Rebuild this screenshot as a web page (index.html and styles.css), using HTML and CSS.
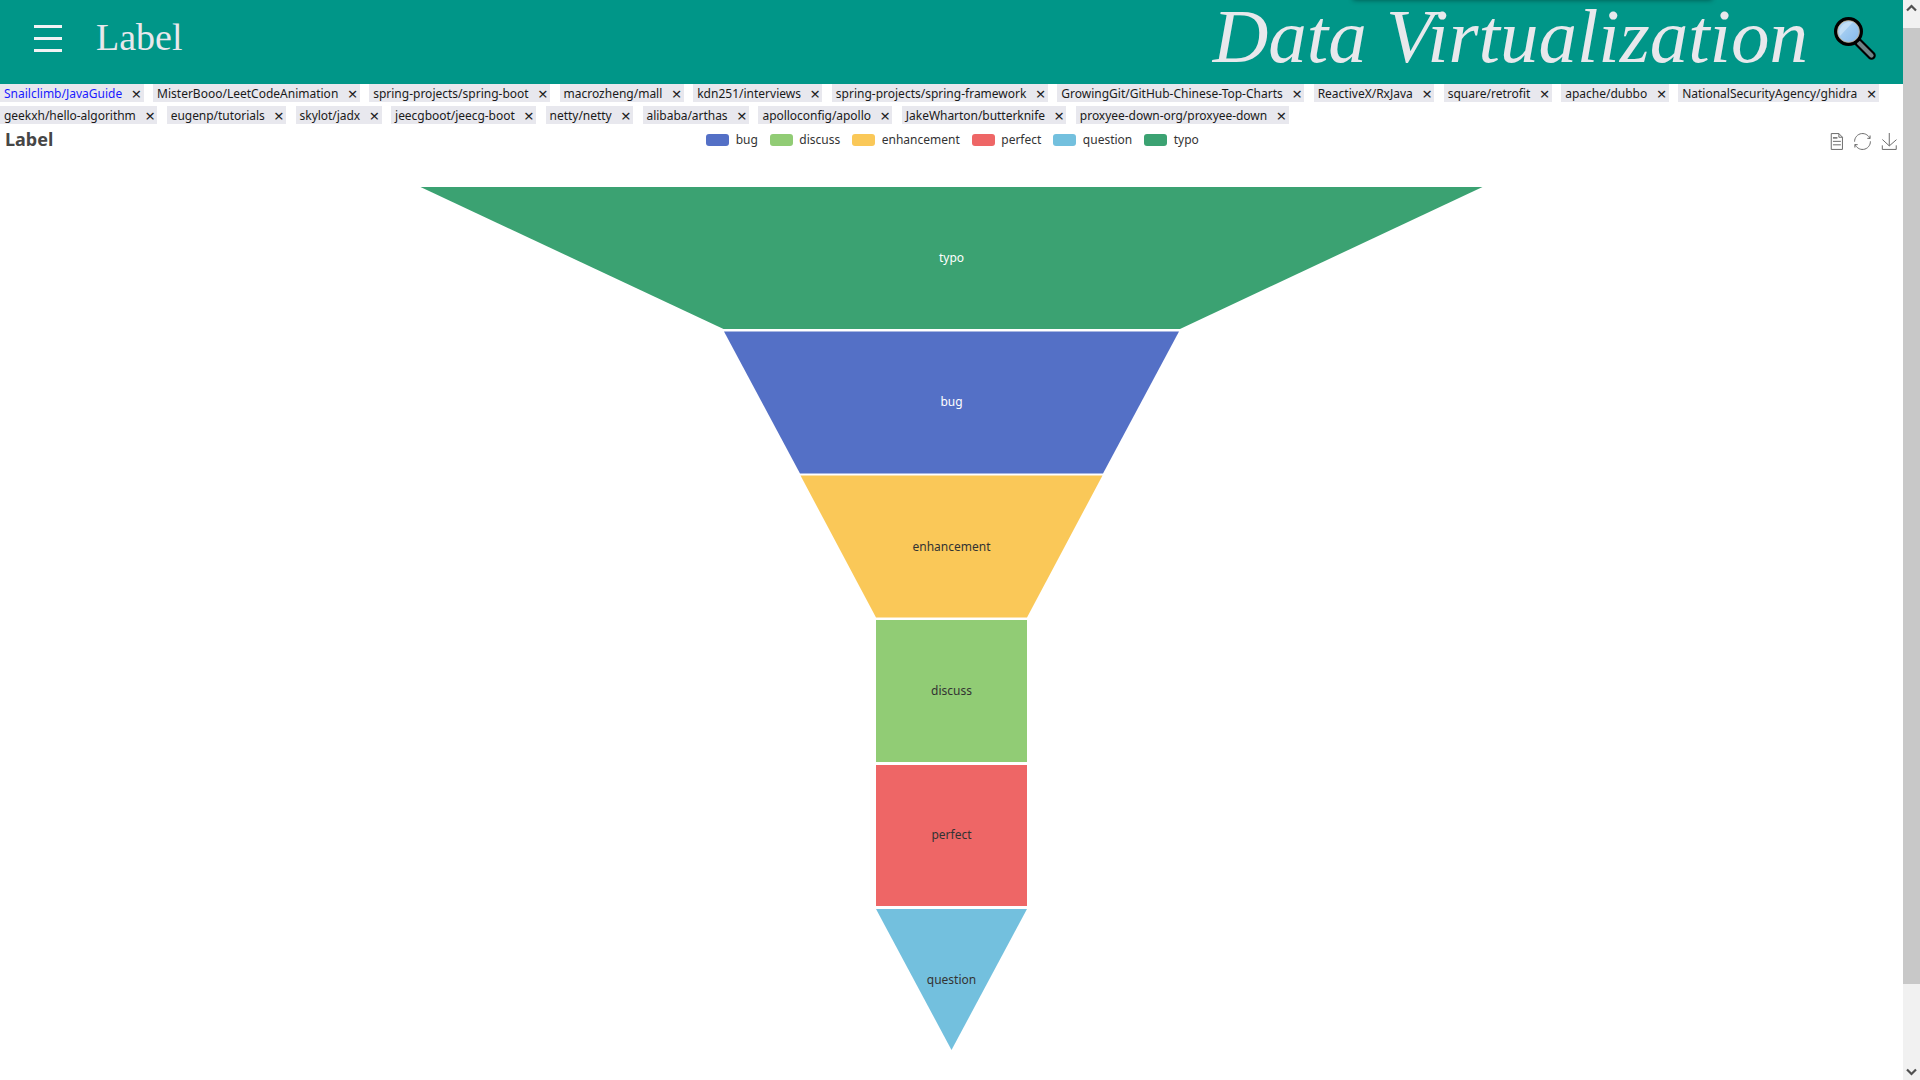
FILE: index.html
```html
<!DOCTYPE html>
<html lang="en">
<head>
<meta charset="utf-8">
<title>Data Virtualization</title>
<link rel="stylesheet" href="styles.css">
</head>
<body>
<div class="page">
  <main class="main">
    <header class="header">
      <div class="header-shadow"></div>
      <button class="burger" aria-label="Menu"><span></span><span></span><span></span></button>
      <div class="crumb">Label</div>
      <h1 class="brand">Data Virtualization</h1>
      <svg class="search" width="46" height="48" viewBox="0 0 46 48" aria-label="Search">
        <defs>
          <linearGradient id="lens" x1="0" y1="0" x2="1" y2="1">
            <stop offset="0" stop-color="#bcdcf6"/><stop offset="1" stop-color="#7fb6ea"/>
          </linearGradient>
        </defs>
        <line x1="24" y1="26" x2="38.5" y2="40.5" stroke="#000" stroke-width="8.5" stroke-linecap="round"/>
        <line x1="26" y1="28" x2="38.5" y2="40.5" stroke="#6f8386" stroke-width="4.2" stroke-linecap="round"/>
        <circle cx="15.5" cy="16.5" r="12.8" fill="url(#lens)" stroke="#000" stroke-width="3.4"/>
        <circle cx="15.5" cy="16.5" r="10.9" fill="none" stroke="#c9a878" stroke-width="0.7"/>
        <path d="M7 21 L20 7 A11 11 0 0 0 7 21Z" fill="#cfe5f8" opacity="0.7"/>
      </svg>
    </header>

    <nav class="tags">
      <div class="tag-row">
        <span class="tag active">Snailclimb/JavaGuide<i>×</i></span>
        <span class="tag">MisterBooo/LeetCodeAnimation<i>×</i></span>
        <span class="tag">spring-projects/spring-boot<i>×</i></span>
        <span class="tag">macrozheng/mall<i>×</i></span>
        <span class="tag">kdn251/interviews<i>×</i></span>
        <span class="tag">spring-projects/spring-framework<i>×</i></span>
        <span class="tag">GrowingGit/GitHub-Chinese-Top-Charts<i>×</i></span>
        <span class="tag">ReactiveX/RxJava<i>×</i></span>
        <span class="tag">square/retrofit<i>×</i></span>
        <span class="tag">apache/dubbo<i>×</i></span>
        <span class="tag">NationalSecurityAgency/ghidra<i>×</i></span>
      </div>
      <div class="tag-row tight">
        <span class="tag">geekxh/hello-algorithm<i>×</i></span>
        <span class="tag">eugenp/tutorials<i>×</i></span>
        <span class="tag">skylot/jadx<i>×</i></span>
        <span class="tag">jeecgboot/jeecg-boot<i>×</i></span>
        <span class="tag">netty/netty<i>×</i></span>
        <span class="tag">alibaba/arthas<i>×</i></span>
        <span class="tag">apolloconfig/apollo<i>×</i></span>
        <span class="tag">JakeWharton/butterknife<i>×</i></span>
        <span class="tag">proxyee-down-org/proxyee-down<i>×</i></span>
      </div>
    </nav>

    <section class="chart-head">
      <h2 class="chart-title">Label</h2>
      <ul class="legend">
        <li><b class="swatch bug"></b>bug</li>
        <li><b class="swatch discuss"></b>discuss</li>
        <li><b class="swatch enhancement"></b>enhancement</li>
        <li><b class="swatch perfect"></b>perfect</li>
        <li><b class="swatch question"></b>question</li>
        <li><b class="swatch typo"></b>typo</li>
      </ul>
      <div class="tools">
        <svg class="tool" viewBox="0 0 60 60"><path d="M17.5,17.3H33 M17.5,17.3H33 M45.4,29.5h-28 M11.5,2v56H51V14.8L38.4,2H11.5z M38.4,2.2v12.7H51 M45.4,41.7h-28"/></svg>
        <svg class="tool" viewBox="0 0 60 60"><path d="M3.8,33.4 M47,18.9h9.8V8.7 M56.3,20.1 C52.1,9,40.5,0.6,26.8,2.1C12.6,3.7,1.6,16.2,2.1,30.6 M13,41.1H3.1v10.2 M3.7,39.9c4.2,11.1,15.8,19.5,29.5,18 c14.2-1.6,25.2-14.1,24.7-28.5"/></svg>
        <svg class="tool" viewBox="0 0 60 60"><path d="M4.7,22.9L29.3,45.5L54.7,23.4M4.6,43.6L4.6,58L53.8,58L53.8,43.6M29.2,45.1L29.2,0"/></svg>
      </div>
    </section>

    <svg class="funnel" viewBox="0 160 1903 920" width="1903" height="920">
      <polygon class="typo-f" points="420.5,187 1482.5,187 1180,329 723.5,329"/>
      <polygon class="bug-f" points="724,331.5 1179,331.5 1103,473.5 800,473.5"/>
      <polygon class="enh-f" points="800.5,475.5 1102.5,475.5 1027,617.5 876,617.5"/>
      <polygon class="dis-f" points="876,620 1027,620 1027,762 876,762"/>
      <polygon class="per-f" points="876,765 1027,765 1027,906 876,906"/>
      <polygon class="que-f" points="876,909 1027,909 951.5,1050"/>
      <text class="flabel light" x="951.5" y="257.5">typo</text>
      <text class="flabel light" x="951.5" y="401.5">bug</text>
      <text class="flabel" x="951.5" y="546.5">enhancement</text>
      <text class="flabel" x="951.5" y="690.5">discuss</text>
      <text class="flabel" x="951.5" y="834.5">perfect</text>
      <text class="flabel" x="951.5" y="979.5">question</text>
    </svg>
  </main>

  <aside class="scrollbar">
    <svg class="chev" viewBox="0 0 17 17"><path d="M4 10.5 L8.5 6 L13 10.5"/></svg>
    <div class="thumb-gap"></div>
    <div class="thumb"></div>
    <div class="track"></div>
    <svg class="chev" viewBox="0 0 17 17"><path d="M4 6.5 L8.5 11 L13 6.5"/></svg>
  </aside>
</div>
</body>
</html>
```
FILE: styles.css
```css
* { box-sizing: border-box; }
html, body { margin: 0; height: 100%; overflow: hidden; background: #fff; }
body { font-family: "Noto Sans", sans-serif; }

.page { display: flex; width: 1920px; height: 1080px; overflow: hidden; }
.main { width: 1903px; display: flex; flex-direction: column; }

.header {
  position: relative;
  flex: 0 0 84px;
  display: flex;
  align-items: center;
  background: #009688;
  padding-left: 34px;
  overflow: hidden;
}
.header-shadow {
  position: absolute;
  left: 1353px;
  top: -30px;
  width: 359px;
  height: 30px;
  background: #00786d;
  box-shadow: 0 0 5px rgba(0, 0, 0, .45);
}
.burger {
  display: flex;
  flex-direction: column;
  gap: 9px;
  width: 28px;
  padding: 0;
  margin: 0 0 7px;
  border: 0;
  background: none;
}
.burger span { display: block; height: 3px; background: #f2f2f4; }
.crumb {
  margin: 0 0 10px 34px;
  font: 38px "Liberation Serif", serif;
  color: #e8e8ec;
}
.brand {
  margin: 0 0 12px auto;
  font: italic 400 77px/72px "Liberation Serif", serif;
  color: #e8e8ec;
  white-space: nowrap;
}
.search { flex: none; margin: 0 24px 6px 25px; }

.tags {
  flex: 0 0 40px;
  display: flex;
  flex-direction: column;
  row-gap: 4px;
  font-size: 12px;
  line-height: 18px;
  color: #1a1a1a;
}
.tag-row { display: flex; column-gap: 9.5px; }
.tag-row.tight { letter-spacing: -0.035px; }
.tag {
  display: inline-flex;
  align-items: center;
  height: 18px;
  padding: 1px 5px 0 4px;
  background: #e8e8ee;
  white-space: nowrap;
}
.tag.active { color: #1a1aff; }
.tag i {
  display: block;
  width: 7px;
  margin-left: 9.4px;
  font-style: normal;
  font-size: 17px;
  line-height: 18px;
  text-align: center;
  color: #222;
}

.chart-head {
  flex: 0 0 36px;
  display: grid;
  grid-template-columns: 1fr auto 1fr;
  align-items: start;
}
.chart-title {
  margin: 2px 0 0 5px;
  font-size: 18px;
  line-height: 26px;
  font-weight: 700;
  color: #464646;
}
.legend {
  display: flex;
  gap: 12px;
  margin: 6px 0 0 2px;
  padding: 0;
  list-style: none;
  font-size: 12px;
  line-height: 20px;
  color: #333;
}
.legend li { display: flex; align-items: center; gap: 6.5px; }
.swatch { display: block; width: 23px; height: 12px; border-radius: 3px; }
.swatch.bug { background: #5470c6; }
.swatch.discuss { background: #91cc75; }
.swatch.enhancement { background: #fac858; }
.swatch.perfect { background: #ee6666; }
.swatch.question { background: #73c0de; }
.swatch.typo { background: #3ba272; }

.tools {
  justify-self: end;
  display: flex;
  gap: 9.5px;
  margin: 9px 5.5px 0 0;
}
.tool { width: 17px; height: 17px; display: block; }
.tool path { fill: none; stroke: #666; stroke-width: 3.4; }

.funnel { display: block; flex: none; }
.typo-f { fill: #3ba272; }
.bug-f { fill: #5470c6; }
.enh-f { fill: #fac858; }
.dis-f { fill: #91cc75; }
.per-f { fill: #ee6666; }
.que-f { fill: #73c0de; }
.flabel {
  font-family: "Noto Sans", sans-serif;
  font-size: 12px;
  text-anchor: middle;
  dominant-baseline: central;
  fill: #333;
}
.flabel.light { fill: #fff; }

.scrollbar {
  width: 17px;
  height: 1080px;
  display: flex;
  flex-direction: column;
  background: #f1f1f1;
}
.chev { display: block; flex: none; width: 17px; height: 17px; }
.chev path { fill: none; stroke: #505050; stroke-width: 2.2; }
.thumb-gap { flex: 0 0 11px; }
.thumb { flex: 0 0 956px; background: #c8c8c8; }
.track { flex: 1; }
```
